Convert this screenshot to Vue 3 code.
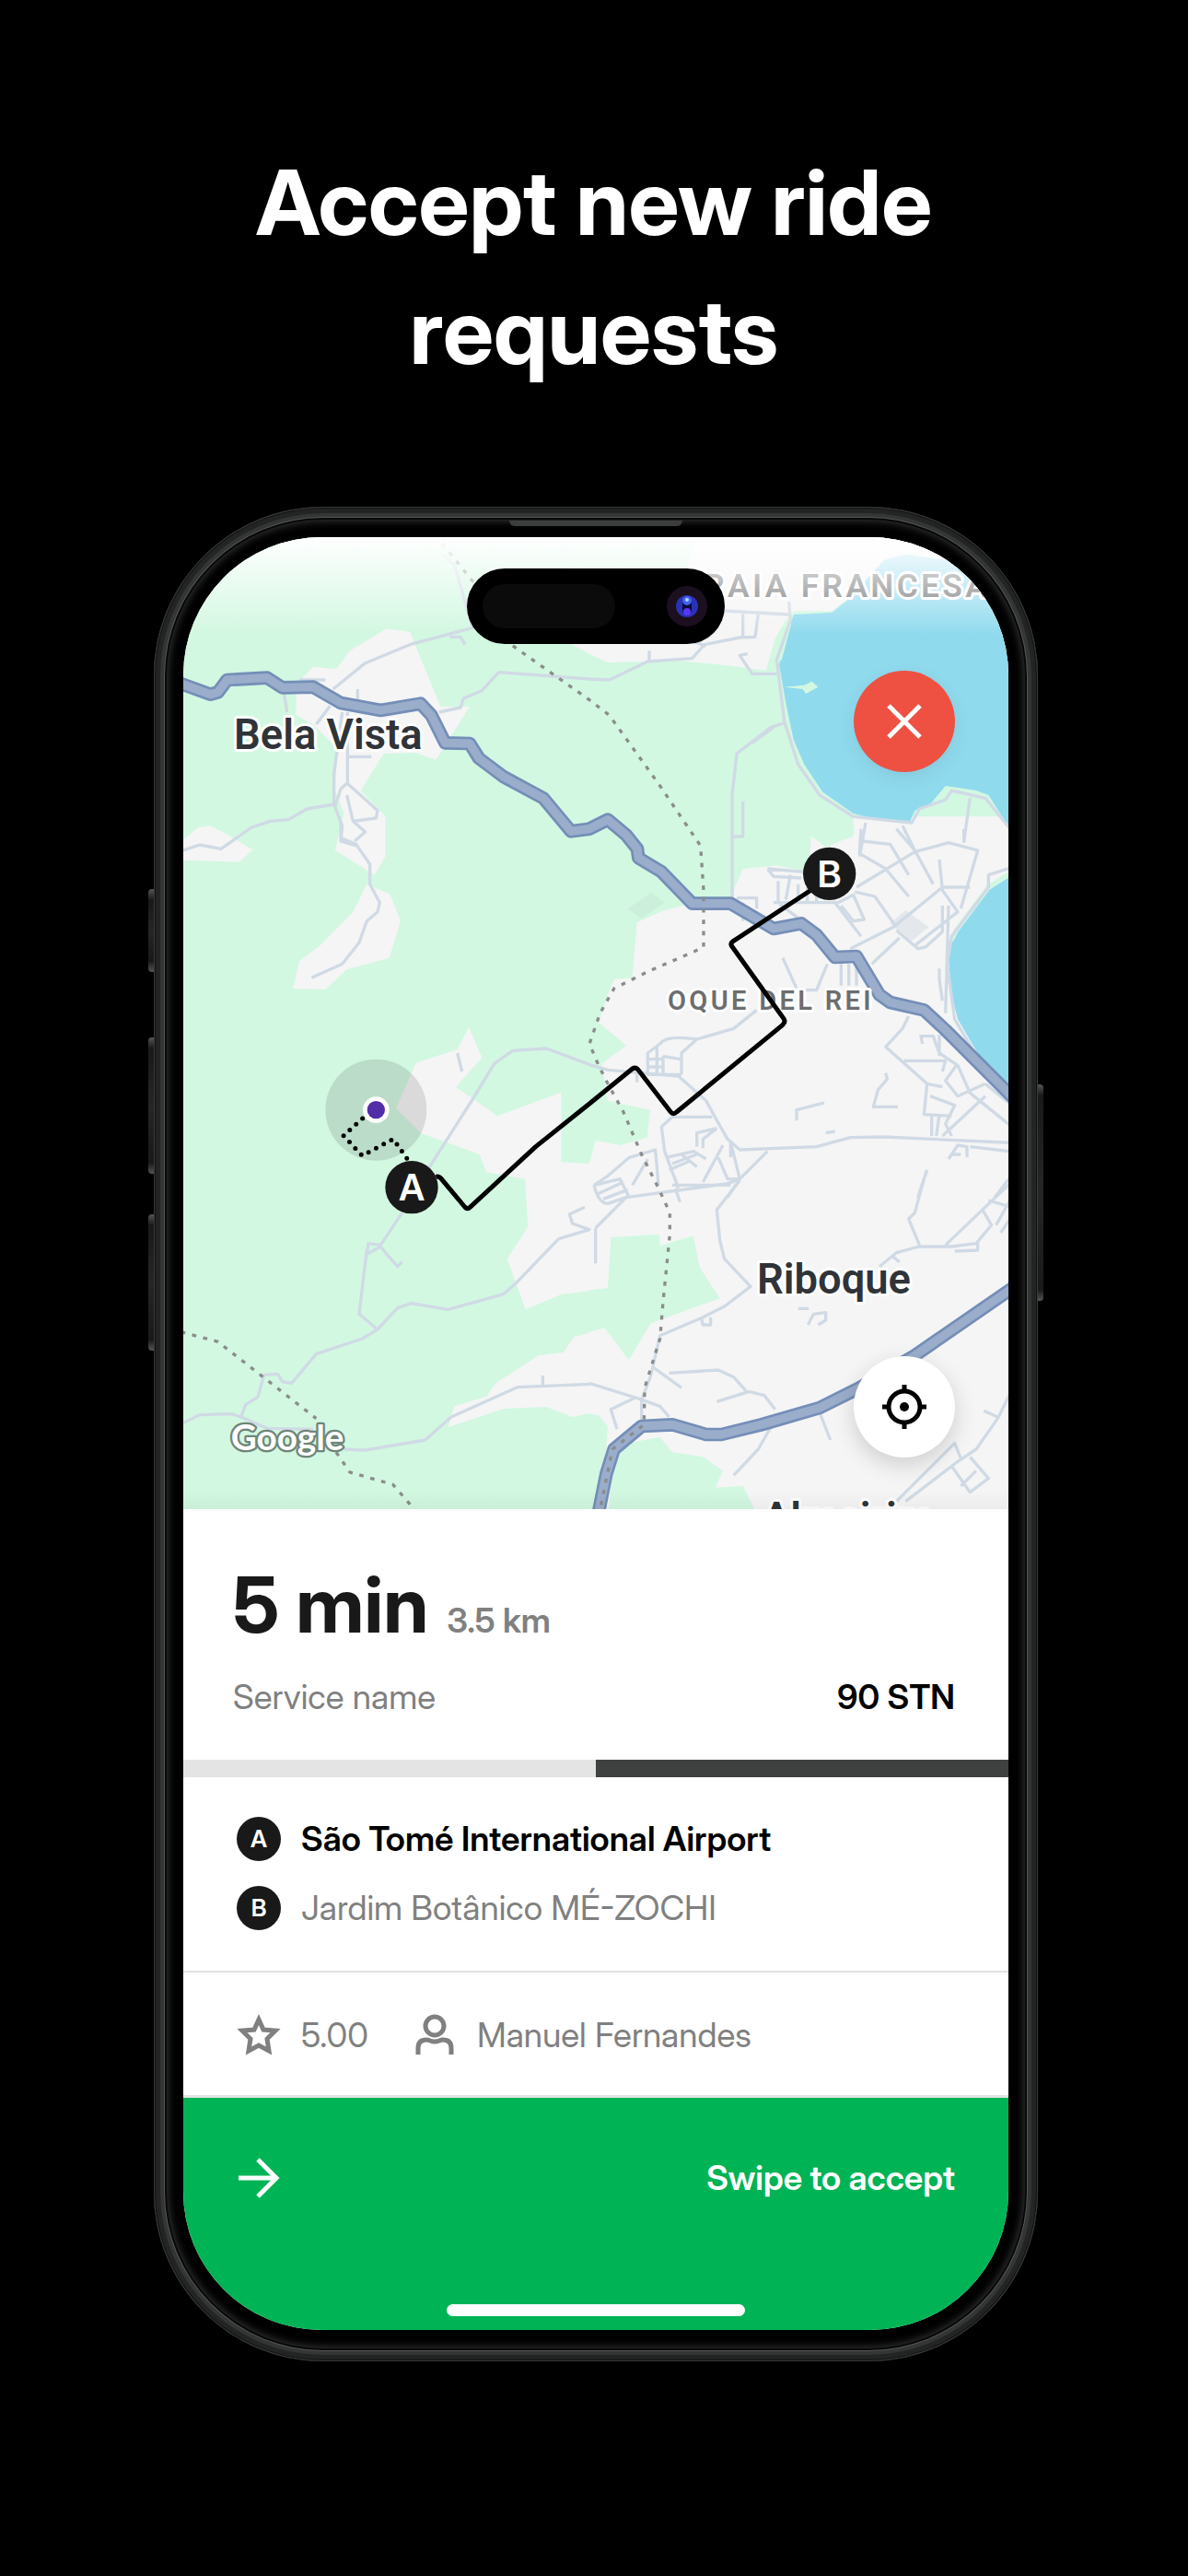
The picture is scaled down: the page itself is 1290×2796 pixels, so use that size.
<script setup>
const ride = {
  eta: '5 min',
  distance: '3.5 km',
  service: 'Service name',
  price: '90 STN',
  rating: '5.00',
  passenger: 'Manuel Fernandes',
  progress: 50,
}

const stops = [
  { label: 'A', name: 'São Tomé International Airport', current: true },
  { label: 'B', name: 'Jardim Botânico MÉ-ZOCHI', current: false },
]

const trunkRoads = [
  'M150,630 L265,672 L290,665 L320,625 L450,618 L500,650 L600,648 L690,700 L820,724 L950,702 L985,740 L1030,830 L1110,832 L1140,880 L1220,940 L1350,1010 L1440,1118 L1500,1110 L1560,1080 L1620,1130 L1656,1175 L1660,1205 L1735,1250 L1835,1353 L1960,1353 L2100,1435 L2190,1418 L2240,1455 L2300,1528 L2370,1525 L2445,1650 L2480,1675 L2590,1700 L2660,1765 L2900,2005',
  'M1525,3360 L1555,3210 L1580,3130 L1670,3055 L1770,3050 L1880,3082 L1930,3082 L2060,3050 L2250,2995 L2380,2930 L2560,2825 L2900,2590',
]
</script>

<template>
  <main class="page">
    <h1 class="headline">Accept new ride requests</h1>

    <div class="phone">
      <span class="key key-action"></span>
      <span class="key key-up"></span>
      <span class="key key-down"></span>
      <span class="key key-power"></span>
      <span class="speaker"></span>

      <div class="screen">
        <section class="map" aria-label="Route map">
          <svg class="map-art" viewBox="177 160 2688 3165" preserveAspectRatio="xMidYMid slice">
            <rect class="wood" x="0" y="0" width="3000" height="3500" />

            <!-- open land -->
            <g class="land">
              <path d="M545,640 L600,582 L675,590 L720,530 L840,458 L915,468 L1015,712 L1110,712 L1000,885 L935,862 L830,865 L755,985 L835,1070 L835,1200 L800,1260 L672,1180 L700,1060 L670,980 L680,850 L600,770 L545,740Z" />
              <path d="M1425,500 L1500,540 L1560,568 L1790,562 L1970,580 L2075,595 L2105,490 L2140,430 L2170,400 H2290 L2370,340 L2870,300 V150 H1850 L1820,260 H1425Z" />
              <path d="M2215,1250 L2222,1135 L2270,1165 L2358,1135 L2360,1070 H2870 V3400 H1500 V3350 L1500,1110 Z" />
              <g transform="translate(120 1110)">
                <path d="M50,42 L105,-5 L145,-10 L195,15 L283,68 L240,108 L50,102Z" />
                <path d="M655,180 L730,212 L765,300 L728,420 L590,458 L520,523 L415,520 L435,430 L500,382 L610,270Z" />
                <path d="M987,645 L1030,745 L945,840 L1080,935 L1288,858 V1085 L1382,1090 V1505 L1290,1515 L1172,1565 L1145,1490 L1112,1400 L1180,1295 L1170,1140 L1045,1118 L1022,1060 L830,990 L750,910 L815,762 L950,718Z" />
              </g>
              <path d="M1502,2750 L1450,2765 L1415,2815 L1335,2825 L1195,2915 L1165,2958 L1060,2990 L1040,3058 L1220,2998 L1360,2992 L1445,3025 L1502,3013Z" />
            </g>

            <!-- woodland on the eastern side -->
            <g class="wood">
              <path d="M1499,1100 H2362 V1130 L2270,1170 L2220,1130 L2205,1220 L2000,1240 L1970,1310 V1335 L1840,1350 L1735,1378 L1655,1415 L1640,1595 L1580,1600 L1560,1650 L1530,1740 L1620,1815 L1540,1875 L1560,1995 L1698,2025 L1688,2115 L1600,2140 L1520,2125 L1499,2200Z" />
              <path d="M1499,2612 L1560,2605 L1570,2440 L1728,2430 L1730,2468 L1838,2435 L1860,2540 L1925,2638 L1700,2720 L1628,2840 L1550,2735 L1499,2748Z" />
              <path d="M1499,3014 L1530,3020 L1560,3055 L1555,3130 L1520,3340 H1499Z" />
              <path d="M1580,3130 L1630,3110 L1730,3090 L1770,3140 L1870,3155 L1935,3200 L1910,3255 L2000,3250 L2050,3350 H1560Z" />
            </g>
            <path class="park" d="M1625,1370 L1700,1318 L1745,1350 L1670,1402Z" />
            <path class="plaza" d="M2480,1418 L2530,1375 L2605,1430 L2550,1475Z" />

            <!-- bays -->
            <g class="water">
              <path d="M2165,412 L2290,405 L2360,350 L2410,290 L2460,235 L2530,215 L2700,240 L2870,300 V1110 L2800,1000 L2760,985 L2660,970 L2610,1030 L2560,1050 L2545,1085 L2440,1080 L2360,1060 L2260,990 L2200,900 L2165,820 L2140,700 L2118,575 L2150,460Z" />
              <path d="M2870,1265 L2800,1310 L2700,1440 L2668,1510 L2680,1650 L2700,1730 L2770,1850 L2870,1945Z" />
            </g>
            <path class="pier" d="M2135,648 L2200,642 L2225,630 L2245,648 L2205,670 L2195,655Z" />
            <path class="shore" d="M2865,1258 L2800,1300 L2695,1440 L2680,1470 M2150,440 L2118,560" />

            <g class="road">
              <path d="M665,655 L770,570 L915,510 L1120,455 L1060,250 L1020,215 M1045,485 H1080 L1095,510 M1500,622 L1205,600 L1150,660 L1090,685 L1080,715 L1010,730 M505,665 L515,730 M555,625 H640 M655,710 L610,770 M745,655 V690 M695,730 L668,930 V1030 L695,1100 L690,1150 L740,1165 M712,730 V960 L690,980 L672,1035 M710,960 L810,1050 L805,1075 L730,1085 L710,1000 M730,1085 L770,1120 L735,1150 M715,875 H790 M170,1182 L230,1162 L300,1175 L400,1105 L460,1085 L520,1080 L580,1045 L670,1030" />
              <path transform="translate(1500 0)" d="M0,622 L65,625 L190,565 L335,555 L375,510 L490,487 L540,485 L550,410 M195,530 V560 M500,410 V485 M440,400 L650,412 M340,500 L380,515 M515,540 L490,545 L530,605 L610,605 M650,370 L655,430 L610,560 L635,760 L680,900 L750,1000 L860,1070 L1050,1090 L1075,1045 L1160,1015 L1180,985 L1290,1010 L1370,1110 M635,765 L590,780 L480,865 L465,1000 V1335 M500,1020 V1135 H470 M530,830 L600,780 M880,1200 L900,1090 M1240,1010 L1220,1150 M1020,1100 L1060,1180" />
              <path transform="translate(120 1110)" d="M570,-20 L570,30 L620,50 L665,115 V180 L697,240 L690,270 L655,300 L630,370 L575,440 L475,485 M950,730 L965,790 M850,1115 L1000,880 L1070,765 L1130,722 L1240,715 L1382,768" />
              <path transform="translate(1500 1110)" d="M0,768 L60,785 L290,805 L380,885 L410,940 L450,1010 L490,1045 L740,1035 L850,1005 L960,1003 L1370,1022 M885,0 L880,80 L965,130 L1040,220 M890,40 L980,50 L1040,150 M1000,0 L1060,70 L1120,180 M870,190 L1060,75 L1170,45 L1265,70 L1210,260 M1220,0 V45 M580,130 L600,155 L690,160 M580,130 L700,140 M615,170 V240 M655,150 L640,230 M680,180 V240 M710,190 V240 M740,200 V240 M480,225 H545 V260 M500,240 V300 M600,240 H810 M620,245 L680,290 M800,240 L885,350 M810,240 L860,215 L895,295 L860,300 L820,250 M865,205 L930,220 L1000,320 M850,390 L990,320 L1150,190 L1240,190 M920,440 L1010,355 M1140,100 L1150,200 L1200,270 L1060,380 M1000,330 L1070,390 L1095,385 L1150,335 V250 M1170,250 L1160,600 M1140,455 V490 L1150,560 M1370,128 L1300,150 V190 L1180,350 L1165,440 L1190,620 L1280,770" />
              <path transform="translate(1500 1110)" d="M630,420 L675,520 M775,440 L740,525 H680 M820,440 V510 M845,440 V510 M870,440 V510 M545,590 L470,650 L350,685 Q250,670 230,700 L190,730 V800 H300 M350,685 L300,730 V800 M220,710 V800 M240,740 V800 M190,750 H240 M190,775 H240 M240,740 L295,750 M155,790 V825 M400,938 H270 L235,970 L245,1050 L290,1170 M415,975 L350,990 V1035 M415,975 L370,1010 V1040 M460,1020 L490,1140 L450,1200 M580,1050 L490,1140 M435,1030 L370,1150 M15,1160 L60,1130 L130,1070 L215,1045 L225,1160 M15,1160 L100,1140 L130,1200 M250,1070 L340,1050 L380,1075 M260,1110 L330,1080 M270,1090 L350,1060 M300,1060 L350,1100 M420,1070 L450,1140 H490 M270,1160 H460 M460,1020 V1070 M140,1160 L190,1075" />
              <path transform="translate(1500 1110)" d="M1040,610 L1020,650 L965,710 L1100,830 L1150,840 M1025,755 L1160,755 L1150,790 M1085,700 L1080,675 H1120 L1140,730 L1200,770 L1240,860 L1370,965 M1140,670 V740 M1100,830 L1090,930 L1180,935 M1110,870 L1190,900 L1160,960 L1180,1000 M1115,930 V1000 M1140,930 L1130,1000 M1195,770 L1160,820 L1200,870 L1290,830 M1290,870 L1150,1000 M1370,895 L1290,830 M965,795 L970,815 L940,850 L925,905 H1005 M675,950 V915 L765,892 M770,990 L800,985 M1170,1075 L1200,1030 L1230,1035 V1070 M1180,1060 H1210 M1240,1035 L1370,1050 M1100,1110 L1070,1200 M1370,1135 L1320,1200" />
              <path transform="translate(120 2250)" d="M770,110 L700,215 L660,210 L655,245 L700,220 L720,245 L755,285 L770,270 M655,230 L630,440 L690,490 M1365,92 L1315,115 L1325,145 L1380,165 L1280,195 L1140,340 L1100,375 L920,425 L800,405 L755,420 L690,490 L640,520 L490,570 L410,665 L380,660 L365,635 L320,638 L300,710 L260,735 L245,775 L215,765 L110,768 L50,798 M245,775 L330,812 L480,815 M580,880 L650,883 L845,850 L930,775 L1145,678 L1382,668 M1228,640 V675" />
              <path transform="translate(1500 2250)" d="M15,20 Q30,80 60,80 L120,60 M25,50 L110,10 M45,65 L125,35 M20,160 L120,60 L450,15 L490,0 M20,160 V275 M490,5 L415,100 L425,200 L440,260 L525,350 L440,415 L370,450 L230,510 L200,640 L170,720 V800 M365,455 L370,475 H395 V450 M1090,0 L1060,110 L1040,130 L1075,215 M945,285 L1000,240 L1075,220 H1180 L1260,210 L1310,150 L1280,100 M985,250 L1010,270 M1160,215 L1370,15 M1190,235 L1265,232 V205 M1300,70 L1370,90 M1325,150 L1370,70 M1340,175 L1370,130 M680,422 H715 M712,475 L730,440 L770,435 V460 L745,475 M210,615 L300,680 M260,632 L420,622 L470,645 L510,690 M415,725 L520,692 L570,705 L605,750 M0,665 L160,715 L230,740 L260,775 M90,815 L70,750 L150,712 M590,810 L550,880 L470,965 M750,760 L785,850 M1000,1050 L1190,860 L1210,910 M1030,1050 L1200,920 L1260,880 L1330,780 L1370,700 M1285,755 L1330,775 M1180,935 L1240,1020 L1300,975 L1240,905 M1210,1000 L1260,950 M280,30 L295,75" />
            </g>

            <g class="trunk-edge"><path v-for="d in trunkRoads" :key="d" :d="d" /></g>
            <g class="trunk"><path v-for="d in trunkRoads" :key="d" :d="d" /></g>

            <path class="border" d="M1020,180 L1125,310 L1245,510 L1500,690 L1565,740 L1730,970 L1845,1140 L1862,1165 L1872,1310 V1495 L1840,1510 L1690,1575 L1580,1630 L1535,1710 L1500,1810 L1530,1880 L1560,1940 L1610,2030 L1670,2170 L1725,2280 L1762,2360 V2430 L1740,2650 L1730,2770 L1680,2930 L1678,3050 L1575,3130 L1535,3325 M170,2748 L290,2780 L610,3030 M675,3140 L720,3205 L860,3245 L925,3320" />

            <g class="places">
              <text x="342" y="850" font-size="136">Bela Vista</text>
              <text x="2046" y="2624" font-size="136">Riboque</text>
              <text x="2064" y="3400" font-size="136">Almeirim</text>
            </g>
            <g class="districts">
              <text x="1795" y="354" font-size="106">PRAIA FRANCESA</text>
              <text x="1755" y="1700" font-size="87">OQUE DEL REI</text>
            </g>
            <text class="attribution" x="332" y="3134" font-size="116">Google</text>

            <!-- pickup approach, route and pins -->
            <circle class="accuracy" cx="805" cy="2025" r="165" />
            <path class="approach" d="M761,2053 L699,2109 L760,2174 L861,2120 L921,2205" />
            <path class="route" d="M1000,2243 Q1010,2240 1018,2250 L1094,2341 Q1102,2350 1111,2342 L1325,2145 L1500,2005 L1640,1891 Q1650,1885 1658,1893 L1765,2032 Q1773,2042 1784,2032 L2130,1748 Q2140,1738 2133,1728 L1964,1492 Q1958,1483 1968,1476 L2282,1270" />
            <circle cx="805" cy="2025" r="43" fill="#fff" />
            <circle cx="805" cy="2025" r="29" fill="#512da8" />
            <g class="pin">
              <circle cx="921" cy="2277" r="86" />
              <text x="921" y="2321" font-size="120">A</text>
              <circle cx="2282" cy="1256" r="86" />
              <text x="2282" y="1300" font-size="120">B</text>
            </g>
          </svg>

          <button class="round close" type="button" aria-label="Decline ride">
            <svg viewBox="0 0 36 36"><path d="M1 1 35 35M35 1 1 35" /></svg>
          </button>
          <button class="round locate" type="button" aria-label="Center on my location">
            <svg viewBox="0 0 48 48">
              <circle cx="24" cy="24" r="17" />
              <path d="M24 0v8M24 40v8M0 24h8M40 24h8" />
              <circle class="dot" cx="24" cy="24" r="5" />
            </svg>
          </button>
        </section>

        <div class="island">
          <span class="sensor"></span>
          <svg class="camera" viewBox="0 0 44 44">
            <circle cx="22" cy="22" r="22" fill="#1b0f20" />
            <circle cx="22" cy="22" r="12" fill="#2a32b4" />
            <rect x="17" y="14" width="10" height="16" rx="4" fill="#0b0b3c" />
            <circle cx="22" cy="16" r="5" fill="#3f63f0" />
            <circle cx="22" cy="15" r="2" fill="#b4ccff" />
            <circle cx="22" cy="28" r="4" fill="#5a35f5" />
          </svg>
        </div>

        <section class="summary">
          <div class="eta">
            <strong>{{ ride.eta }}</strong>
            <span>{{ ride.distance }}</span>
          </div>
          <div class="fare">
            <span>{{ ride.service }}</span>
            <strong>{{ ride.price }}</strong>
          </div>
        </section>

        <div class="timer"><div class="timer-left" :style="{ width: ride.progress + '%' }"></div></div>

        <ol class="stops">
          <li v-for="stop in stops" :key="stop.label" :class="{ current: stop.current }">
            <span class="badge">{{ stop.label }}</span>
            <span>{{ stop.name }}</span>
          </li>
        </ol>

        <section class="rider">
          <div class="fact">
            <svg viewBox="0 0 48 48">
              <path d="M24 7 29 18 42 19 33 28 35 41 24 35 13 41 15 28 6 19 19 18Z" />
            </svg>
            <span>{{ ride.rating }}</span>
          </div>
          <div class="fact">
            <svg viewBox="0 0 48 48">
              <circle cx="24" cy="14" r="10" />
              <path d="M6 45V38Q6 29 15 29Q17 29 19 30Q24 32 29 30Q31 29 33 29Q42 29 42 38V45" />
            </svg>
            <span>{{ ride.passenger }}</span>
          </div>
        </section>

        <button class="accept" type="button">
          <svg viewBox="0 0 48 48"><path d="M2 24H42M23 4 43 24 23 44" /></svg>
          <span>Swipe to accept</span>
          <i class="home-bar"></i>
        </button>
      </div>
    </div>
  </main>
</template>

<style>
body {
  background: #000;
}
</style>

<style scoped>
.page {
  box-sizing: border-box;
  min-height: 100vh;
  padding: 150px 0 233px;
  background: #000;
  color: #000;
  font-family: "Inter Display", Inter, "Liberation Sans", sans-serif;
  font-size: 37px;
  line-height: 48px;
}

.headline {
  max-width: 800px;
  margin: 0 auto 120px;
  color: #fff;
  font-size: 98px;
  font-weight: 700;
  line-height: 140px;
  text-align: center;
}

.phone {
  position: relative;
  margin: 0 163px 0 167px;
  padding: 33px 32px 34px;
  border-radius: 184px;
  background: #000;
  box-shadow:
    inset 0 0 0 1px #3a3b3a,
    inset 0 0 0 2px #101110,
    inset 0 0 0 7px #232524,
    inset 0 0 0 11px #343635,
    inset 0 0 0 12px #555755,
    inset 0 0 0 14px #080808,
    inset 0 0 10px 15px #383a39;
}

.key {
  position: absolute;
  left: -6px;
  width: 6px;
  border-radius: 4px 0 0 4px;
  background: linear-gradient(#555 0, #191919 12px, #262626 50%, #191919 calc(100% - 12px), #555 100%);
}

.key-action {
  top: 415px;
  height: 90px;
}

.key-up {
  top: 576px;
  height: 148px;
}

.key-down {
  top: 768px;
  height: 148px;
}

.key-power {
  top: 627px;
  right: -6px;
  left: auto;
  height: 235px;
  border-radius: 0 4px 4px 0;
}

.speaker {
  position: absolute;
  top: 15px;
  left: 50%;
  width: 188px;
  height: 6px;
  border-radius: 0 0 6px 6px;
  background: #3c3e3d;
  transform: translateX(-50%);
}

.screen {
  position: relative;
  overflow: hidden;
  border-radius: 150px;
  background: #fff;
}

.map {
  position: relative;
}

.map::after {
  content: "";
  position: absolute;
  inset: 0;
  background:
    linear-gradient(#fff, rgb(255 255 255 / 0) 106px),
    linear-gradient(to top, rgb(0 0 0 / 0.04), rgb(0 0 0 / 0) 20px);
  pointer-events: none;
}

.map-art {
  display: block;
  width: 100%;
  height: auto;
}

.wood {
  fill: #d2f8e1;
}

.land {
  fill: #f5f5f5;
}

.park {
  fill: #cbefda;
}

.plaza {
  fill: #e4e7ec;
}

.water {
  fill: #90daee;
}

.pier {
  fill: #d2f8e1;
}

.shore {
  fill: none;
  stroke: #d2f8e1;
  stroke-width: 16;
}

.road,
.trunk-edge,
.trunk,
.border,
.route,
.approach {
  fill: none;
  stroke-linejoin: round;
}

.road {
  stroke: #d0dae5;
  stroke-width: 10;
}

.trunk-edge {
  stroke: #748eb8;
  stroke-width: 44;
}

.trunk {
  stroke: #9aadca;
  stroke-width: 28;
}

.border {
  stroke: #8a8d8c;
  stroke-width: 10;
  stroke-dasharray: 14 23;
}

.places,
.districts {
  fill: #303438;
  stroke: #fff;
  stroke-width: 18;
  stroke-linejoin: round;
  paint-order: stroke;
  font-family: Roboto, sans-serif;
  font-weight: 600;
}

.districts {
  fill: #6c6e70;
  letter-spacing: 10px;
}

.attribution {
  fill: #fff;
  stroke: #6f8579;
  stroke-width: 14;
  stroke-linejoin: round;
  paint-order: stroke;
  font-family: Lato, sans-serif;
  font-weight: 700;
}

.accuracy {
  fill: rgb(0 0 0 / 0.11);
}

.route {
  stroke: #000;
  stroke-width: 15;
}

.approach {
  stroke: #000;
  stroke-width: 15;
  stroke-dasharray: 0 28;
  stroke-linecap: round;
}

.pin circle {
  fill: #191919;
}

.pin text {
  fill: #fff;
  font-weight: 600;
  text-anchor: middle;
}

.round {
  position: absolute;
  right: 58px;
  z-index: 1;
  display: flex;
  align-items: center;
  justify-content: center;
  width: 110px;
  height: 110px;
  padding: 0;
  border: 0;
  border-radius: 50%;
  box-shadow: 0 8px 24px rgb(0 0 0 / 0.16);
}

.round svg {
  fill: none;
}

.close {
  top: 145px;
  background: #ee5142;
  box-shadow: 0 6px 20px rgb(0 0 0 / 0.08);
}

.close svg {
  width: 36px;
  height: 36px;
  overflow: visible;
  stroke: #fff;
  stroke-width: 5;
}

.locate {
  bottom: 56px;
  background: #fff;
}

.locate svg {
  width: 48px;
  height: 48px;
  stroke: #000;
  stroke-width: 5;
}

.locate .dot {
  fill: #000;
  stroke: none;
}

.island {
  position: absolute;
  top: 34px;
  left: 50%;
  z-index: 2;
  box-sizing: border-box;
  display: flex;
  align-items: center;
  justify-content: space-between;
  width: 280px;
  height: 82px;
  padding: 0 19px 0 17px;
  border-radius: 41px;
  background: #000;
  transform: translateX(-50%);
}

.sensor {
  width: 144px;
  height: 48px;
  border-radius: 24px;
  background: #0b0b0b;
}

.camera {
  width: 44px;
  height: 44px;
}

.summary {
  display: flex;
  flex-direction: column;
  gap: 26px;
  padding: 54px 58px 44px 54px;
}

.eta {
  display: flex;
  align-items: baseline;
  gap: 20px;
  line-height: 100px;
}

.eta strong {
  color: #191919;
  font-size: 84px;
  font-weight: 700;
}

.eta span {
  color: #808080;
  font-weight: 600;
  line-height: 48px;
}

.fare {
  display: flex;
  justify-content: space-between;
  color: #808080;
}

.fare strong {
  color: #000;
  font-weight: 600;
}

.timer {
  height: 19px;
  background: #3f4140;
}

.timer-left {
  height: 100%;
  background: #e4e4e4;
}

.stops {
  display: flex;
  flex-direction: column;
  gap: 27px;
  margin: 0;
  padding: 43px 58px 44px;
  border-bottom: 2px solid #e2e2e2;
  list-style: none;
}

.stops li {
  display: flex;
  align-items: center;
  gap: 22px;
  color: #808080;
}

.stops .current {
  color: #000;
  font-weight: 600;
}

.badge {
  width: 48px;
  border-radius: 50%;
  background: #191919;
  color: #fff;
  font-size: 26px;
  font-weight: 600;
  text-align: center;
}

.rider {
  display: flex;
  gap: 48px;
  padding: 44px 58px 41px;
  border-bottom: 3px solid #e2e2e2;
  color: #808080;
}

.fact {
  display: flex;
  align-items: center;
  gap: 22px;
}

.fact svg {
  width: 48px;
  height: 48px;
  fill: none;
  stroke: #808080;
  stroke-width: 5;
}

.accept {
  position: relative;
  display: flex;
  align-items: center;
  justify-content: space-between;
  width: 100%;
  padding: 63px 58px 141px;
  border: 0;
  background: #00b455;
  color: #fff;
  font: inherit;
  font-weight: 600;
}

.accept svg {
  width: 48px;
  height: 48px;
  fill: none;
  stroke: #fff;
  stroke-width: 5;
}

.home-bar {
  position: absolute;
  bottom: 15px;
  left: 50%;
  width: 324px;
  height: 13px;
  border-radius: 7px;
  background: #fff;
  transform: translateX(-50%);
}
</style>
